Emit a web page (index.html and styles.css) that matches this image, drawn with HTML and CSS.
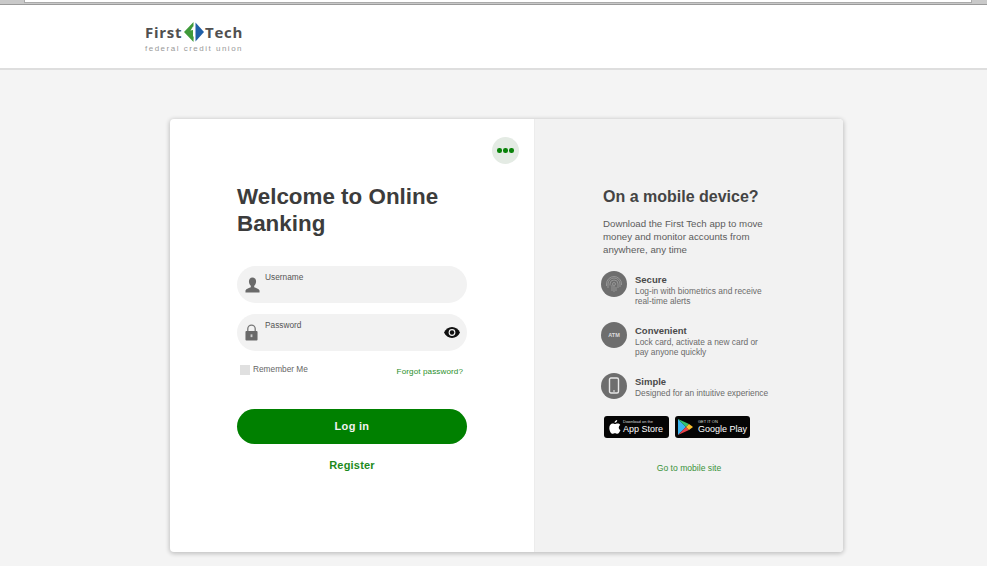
FILE: index.html
```html
<!DOCTYPE html>
<html lang="en">
<head>
<meta charset="utf-8">
<title>First Tech Online Banking</title>
<link rel="stylesheet" href="styles.css">
</head>
<body>
<div class="chrome"><div class="chrome-field"></div></div>
<header class="site-header">
  <div class="logo">
    <div class="logo-main">
      <span>First</span>
      <svg class="logo-mark" width="20" height="20" viewBox="0 0 20 20"><path d="M9.500 0L0 10l9.500 10 .2-5.500L9 10V6.500L6.500 8.500 9 4.500h.5z" fill="#3f9a3a"/><path d="M6.500 8.500L9.300 5.200H11V14.500H9V8z" fill="#fff"/><path d="M11.500 0.500L20 10l-8.500 9.500z" fill="#1f5fa8"/></svg>
      <span>Tech</span>
    </div>
    <div class="logo-sub">federal credit union</div>
  </div>
</header>
<main class="stage">
  <section class="card">
    <div class="login">
      <button class="more" aria-label="More"><i></i><i></i><i></i></button>
      <h1>Welcome to Online Banking</h1>
      <div class="field">
        <svg class="field-icon" width="15" height="16" viewBox="0 0 16 17"><path d="M8 0.500c2.600 0 3.800 2 3.800 4.300 0 2-.9 3.700-2 4.500v1.600c1.500.7 5 1.500 5.700 3.400V16.500H.5v-2.200c.7-1.900 4.200-2.700 5.700-3.400V9.300c-1.100-.8-2-2.500-2-4.500C4.200 2.500 5.400.5 8 .5z" fill="#6a6a6a"/></svg>
        <label>Username</label>
      </div>
      <div class="field">
        <svg class="field-icon field-icon-lock" width="14" height="18" viewBox="0 0 14 18"><path d="M3 8V5a4 4 0 0 1 8 0v3" fill="none" stroke="#777" stroke-width="1.400"/><rect x="0.500" y="7.500" width="13" height="10" rx="1" fill="#6a6a6a"/><rect x="6" y="11" width="2" height="3" fill="#ccc"/></svg>
        <label>Password</label>
        <svg class="eye" width="16" height="11" viewBox="0 0 16 11"><path d="M8 0C4.500 0 1.500 2.200 0 5.500 1.500 8.800 4.500 11 8 11s6.500-2.200 8-5.500C14.500 2.200 11.500 0 8 0z" fill="#111"/><circle cx="8" cy="5.500" r="3.400" fill="#f2f2f2"/><circle cx="8" cy="5.500" r="2.200" fill="#111"/></svg>
      </div>
      <div class="options">
        <span class="remember"><span class="check"></span>Remember Me</span>
        <a class="forgot" href="#">Forgot password?</a>
      </div>
      <button class="login-btn">Log in</button>
      <a class="register" href="#">Register</a>
    </div>
    <aside class="promo">
      <h2>On a mobile device?</h2>
      <p class="lead">Download the First Tech app to move money and monitor accounts from anywhere, any time</p>
      <ul class="features">
        <li class="feature">
          <span class="badge"><svg width="18" height="18" viewBox="0 0 18 18" fill="none" stroke="#9a9a9a" stroke-width=".9"><circle cx="9" cy="9" r="1.500"/><path d="M5 10.500V9a4 4 0 0 1 8 0v4M3 13V9a6 6 0 0 1 12 0v3M7 16v-6M11 16v-4M9 17v-6M1.500 11V9a7.500 7.500 0 0 1 15 0v1"/></svg></span>
          <div><h3>Secure</h3><p>Log-in with biometrics and receive real-time alerts</p></div>
        </li>
        <li class="feature">
          <span class="badge badge-text">ATM</span>
          <div><h3>Convenient</h3><p>Lock card, activate a new card or pay anyone quickly</p></div>
        </li>
        <li class="feature">
          <span class="badge"><svg width="12" height="17" viewBox="0 0 12 17" fill="none"><rect x="1.500" y="1" width="9" height="15" rx="1.500" stroke="#e8e8e8" stroke-width="1.400"/><path d="M5 14h2" stroke="#e8e8e8"/></svg></span>
          <div><h3>Simple</h3><p>Designed for an intuitive experience</p></div>
        </li>
      </ul>
      <div class="stores">
        <a class="store store-apple" href="#">
          <svg width="12" height="14" viewBox="0 0 12 14"><path d="M8.200 0c.1 1.500-1.200 2.900-2.600 2.800C5.400 1.400 6.800.1 8.200 0zM11.500 10c-.7 1.700-1.800 3.800-3.200 3.800-.9 0-1.300-.6-2.400-.6s-1.500.6-2.400.6C2 13.800.3 10.700.3 8 .3 5.200 2 3.500 3.700 3.500c1 0 1.800.6 2.400.6s1.100-.6 2.500-.6c1 0 2 .5 2.700 1.400-2.200 1.300-1.900 4.200.2 5.100z" fill="#fff"/></svg>
          <span class="store-text"><small>Download on the</small><b>App Store</b></span>
        </a>
        <a class="store store-google" href="#">
          <svg width="15" height="16" viewBox="0 0 15 16"><path d="M0 0v16l8-8z" fill="#3bb5f0"/><path d="M0 0l8 8 3-3z" fill="#36c46f"/><path d="M0 16l8-8 3 3z" fill="#e9434a"/><path d="M11 5l4 3-4 3-3-3z" fill="#fbc02d"/></svg>
          <span class="store-text"><small>GET IT ON</small><b>Google Play</b></span>
        </a>
      </div>
      <a class="mobile-link" href="#">Go to mobile site</a>
    </aside>
  </section>
</main>
</body>
</html>
```

FILE: styles.css
```css
* { box-sizing: border-box; }
html, body { margin: 0; height: 566px; overflow: hidden; }
body { background: #f4f4f4; font-family: "Liberation Sans", Arial, sans-serif; color: #333; }
a { text-decoration: none; }

.chrome { height: 5px; background: #c9c9c9; border-bottom: 1px solid #9a9a9a; padding: 0 15px 0 24px; }
.chrome-field { height: 3px; background: #fff; border: 1px solid #aaa; border-top: 0; }

.site-header { height: 65px; background: #fff; border-bottom: 2px solid #dedede; padding: 17px 0 0 145px; }
.logo { width: 98px; color: #505050; }
.logo-main { display: flex; align-items: center; justify-content: space-between; height: 20px; font-family: "Open Sans", sans-serif; font-weight: 700; font-size: 15px; letter-spacing: 0.700px; }
.logo-mark { margin: 0 -1px; flex: none; }
.logo-sub { font-size: 8px; line-height: 10px; letter-spacing: 1.500px; color: #999; margin-top: 2px; white-space: nowrap; }

.stage { padding: 49px 0 0 170px; }
.card { width: 673px; height: 433px; display: flex; background: #fff; border-radius: 4px; box-shadow: 0 1px 4px 1px rgba(0,0,0,.2); overflow: hidden; }

.login { width: 364px; padding: 64px 67px 0; position: relative; display: flex; flex-direction: column; }
.more { position: absolute; top: 18px; right: 15px; width: 27px; height: 27px; padding: 0; border: 0; border-radius: 50%; background: #e4ebe4; display: flex; align-items: center; justify-content: center; gap: 1.500px; }
.more i { width: 4.500px; height: 4.500px; border-radius: 50%; background: #0a820a; }
h1 { margin: 0 0 29px; font-size: 22.400px; line-height: 27px; font-weight: 700; color: #3c3c3c; }

.field { height: 37px; border-radius: 19px; background: #f2f2f2; margin-bottom: 11px; display: flex; align-items: flex-start; padding: 0 7px 0 8px; position: relative; }
.field-icon { margin-top: 11px; flex: none; }
.field-icon-lock { margin-top: 10px; height: 17px; width: 13px; }
.field label { position: absolute; left: 28px; top: 6px; font-size: 8.300px; line-height: 11px; color: #555; }
.eye { position: absolute; right: 7px; top: 13px; }

.options { display: flex; justify-content: space-between; padding: 2px 4px 0 3px; height: 47px; }
.remember { display: flex; align-items: flex-start; gap: 3px; font-size: 8.300px; line-height: 11px; color: #666; }
.check { width: 10px; height: 10px; background: #e0e0e0; margin-top: 1px; }
.forgot { font-size: 8.100px; line-height: 11px; color: #2a8f2a; margin-top: 2px; letter-spacing: .1px; }

.login-btn { height: 35px; width: 230px; padding: 0 0 2px; border: 0; border-radius: 18px; background: #008000; color: #f2f2f2; font: 700 11px "Liberation Sans", Arial, sans-serif; letter-spacing: .3px; }
.register { align-self: center; margin-top: 15px; font-size: 11px; line-height: 13px; font-weight: 700; color: #1d8a1d; letter-spacing: .2px; }

.promo { flex: 1; background: #f2f2f2; padding: 68px 73px 0 68px; border-left: 1px solid #ececec; display: flex; flex-direction: column; }
h2 { margin: 0 0 11px; font-size: 16px; line-height: 19px; font-weight: 700; color: #444; white-space: nowrap; }
.lead { margin: 0 0 13.500px; font-size: 9.700px; line-height: 13px; color: #5c5c5c; width: 172px; }
.features { list-style: none; margin: 0 -20px 0 -2px; padding: 0; }
.feature { display: flex; gap: 8px; height: 51px; align-items: flex-start; }
.feature:nth-child(3) { height: 44px; }
.badge { width: 26px; height: 26px; flex: none; border-radius: 50%; background: #6e6e6e; display: flex; align-items: center; justify-content: center; margin-top: 1px; }
.badge-text { font-size: 5.500px; font-weight: 700; color: #ddd; }
h3 { margin: 4px 0 1px; font-size: 9.500px; line-height: 11px; font-weight: 700; color: #4a4a4a; }
.feature p { margin: 0; font-size: 8.400px; line-height: 10.500px; color: #6a6a6a; width: 136px; }
.feature:nth-child(3) p { white-space: nowrap; }

.stores { display: flex; gap: 6px; margin-left: 1px; }
.store { height: 22px; background: #050505; border-radius: 3px; display: flex; align-items: center; color: #fff; gap: 3px; }
.store-apple { width: 65px; flex: none; padding-left: 5px; gap: 2px; }
.store-google { width: 75px; flex: none; padding-left: 3px; gap: 5px; }
.store-text { display: flex; flex-direction: column; }
.store-text small { font-size: 4px; line-height: 4px; white-space: nowrap; color: #ddd; }
.store-text b { font-size: 9px; line-height: 10px; font-weight: 400; white-space: nowrap; }
.mobile-link { align-self: center; margin-top: 25px; font-size: 8.600px; line-height: 11px; color: #3a933a; }
```
